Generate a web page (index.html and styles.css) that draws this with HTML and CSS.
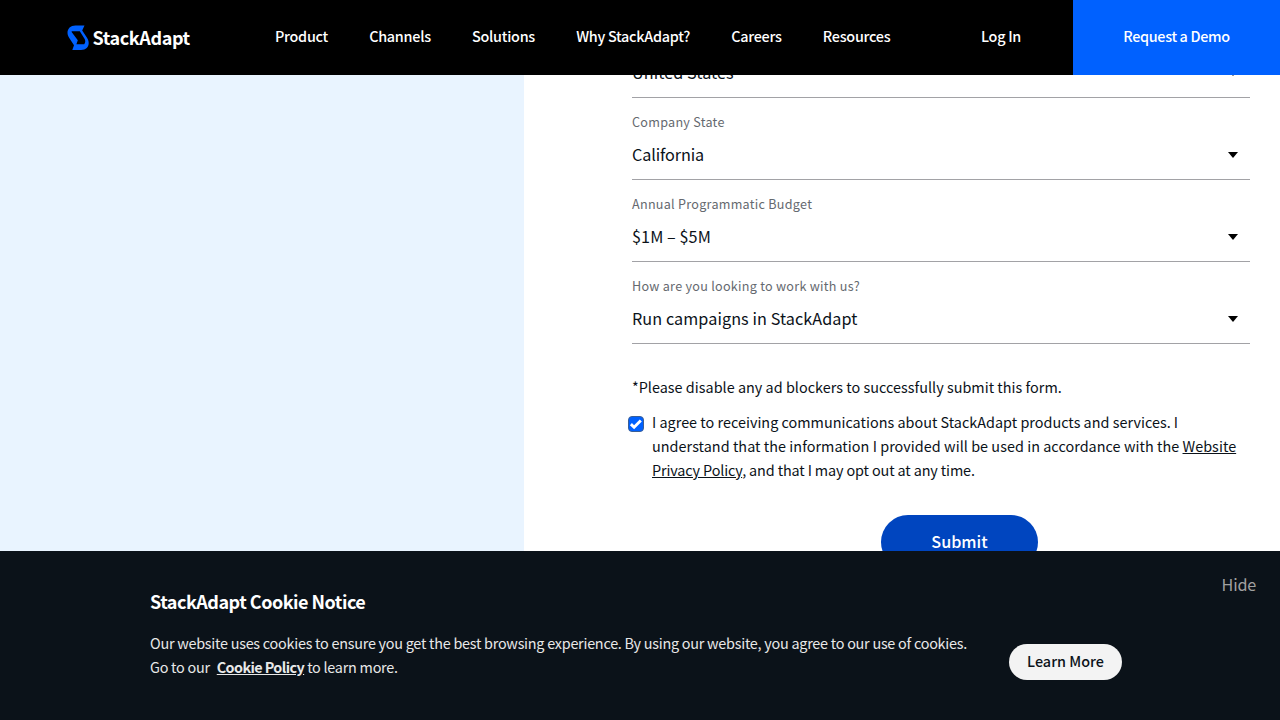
FILE: index.html
```html
<!DOCTYPE html>
<html lang="en">
<head>
<meta charset="utf-8">
<title>StackAdapt</title>
<link rel="stylesheet" href="styles.css">
</head>
<body>
<header class="header">
  <a class="logo">
    <svg class="logo-mark" width="22" height="26" viewBox="0 0 22 26"><path fill="#0061ff" fill-rule="evenodd" d="M17.5.4H8.500C3.500.4.5 3.600.5 7.600c0 2 .6 3.600 1.600 5.200L7 20.200 5.300 25H14c5 0 7.700-3 7.700-7 0-2-.7-3.700-1.700-5.200L15.200 5.400zM4.600 6.200h8.200l4.700 7.600c1.200 2 .9 4-.3 5.400H9.400l1.400-4L4.800 7.200z"/></svg>
    <span class="logo-text">StackAdapt</span>
  </a>
  <nav class="nav">
    <a>Product</a><a>Channels</a><a>Solutions</a><a>Why StackAdapt?</a><a>Careers</a><a>Resources</a>
  </nav>
  <a class="login">Log In</a>
  <a class="demo">Request a Demo</a>
</header>
<main class="main">
  <aside class="panel"></aside>
  <form class="form">
    <div class="field field-scrolled"><div class="value"><span>United States</span><i class="caret"></i></div></div>
    <div class="field"><label>Company State</label><div class="value value-tight"><span>California</span><i class="caret"></i></div></div>
    <div class="field"><label>Annual Programmatic Budget</label><div class="value"><span>$1M – $5M</span><i class="caret"></i></div></div>
    <div class="field"><label>How are you looking to work with us?</label><div class="value"><span>Run campaigns in StackAdapt</span><i class="caret"></i></div></div>
    <p class="note">*Please disable any ad blockers to successfully submit this form.</p>
    <div class="consent">
      <svg class="check" width="16" height="16" viewBox="0 0 16 16"><rect x=".5" y=".5" width="15" height="15" rx="3.500" fill="#0061ff" stroke="#3b5f96"/><path d="M2.900 8.100l3.200 3.100 6.700-6.700" fill="none" stroke="#fff" stroke-width="2.900"/></svg>
      <p><span class="lead">I agree to receiving communications about StackAdapt products and services. I</span><br>understand that the information I provided will be used in accordance with the <a>Website</a><br><span class="tail"><a>Privacy Policy</a>, and that I may opt out at any time.</span></p>
    </div>
    <button type="button" class="submit">Submit</button>
  </form>
</main>
<footer class="cookie">
  <div class="cookie-text">
    <h2>StackAdapt Cookie Notice</h2>
    <p>Our website uses cookies to ensure you get the best browsing experience. By using our website, you agree to our use of cookies.<br>Go to our &nbsp;<a>Cookie Policy</a> to learn more.</p>
  </div>
  <a class="more">Learn More</a>
  <a class="hide">Hide</a>
</footer>
</body>
</html>
```
FILE: styles.css
```css
* { box-sizing: border-box; }
body {
  margin: 0;
  height: 720px;
  display: grid;
  grid-template-rows: 75px 476px 169px;
  overflow: hidden;
  font-family: "Noto Sans CJK SC", "Noto Sans", sans-serif;
  font-size: 14.4px;
  color: #0b1219;
  background: #fff;
}
.header { display: flex; background: #000; color: #fff; font-weight: 500; letter-spacing: -.27px; line-height: 72px; white-space: nowrap; }
.logo { display: flex; align-items: flex-start; gap: 3.500px; width: 275px; padding-left: 67px; }
.logo-mark { margin-top: 25px; }
.logo-text { font-size: 18px; font-weight: 700; line-height: 74px; letter-spacing: -.4px; }
.nav { display: flex; gap: 41.200px; flex: 1; }
.login { width: 92px; }
.demo { width: 207px; height: 75px; text-align: center; background: #0061ff; letter-spacing: -.35px; }
.main { display: grid; grid-template-columns: 524px 1fr; overflow: hidden; }
.panel { background: #e9f4ff; }
.form { display: flex; flex-direction: column; padding: 0 30px 0 108px; }
.form > * { flex-shrink: 0; }
.field { height: 82px; padding-top: 13px; border-bottom: 1px solid #a2a2a6; }
.field label { display: block; font-size: 12.600px; line-height: 22px; letter-spacing: .27px; color: #65696f; }
.value { display: flex; align-items: center; justify-content: space-between; height: 42px; padding-right: 12px; font-size: 16.200px; letter-spacing: .08px; }
.value-tight { letter-spacing: -.1px; }
.field-scrolled { height: 23px; padding-top: 0; }
.field-scrolled .value { margin-top: -24px; }
.caret { width: 0; height: 0; margin-top: 2px; border: 5px solid transparent; border-top: 6px solid #000; border-bottom: 0; }
.note { margin: 31px 0 11px; line-height: 24px; letter-spacing: .02px; }
.consent { display: flex; gap: 8px; margin-left: -4px; line-height: 24px; letter-spacing: .04px; white-space: nowrap; }
.consent p { margin: 0; }
.consent a, .cookie-text a { text-decoration: underline; }
.lead { letter-spacing: .01px; }
.tail { letter-spacing: -.13px; }
.check { margin-top: 6px; flex: none; }
.submit { width: 157px; height: 54px; margin: 33px 0 0 249px; padding: 0 0 2px; border: 0; border-radius: 27px; background: #0045bf; color: #fff; font: 500 16.200px/52px "Noto Sans CJK SC", sans-serif; }
.cookie { display: flex; background: #0b1219; color: #e8e8e8; padding-left: 150px; white-space: nowrap; }
.cookie-text { width: 859px; padding-top: 36px; }
.cookie h2 { margin: 0 0 16px; font-size: 18px; line-height: 28px; letter-spacing: -.5px; color: #fff; }
.cookie p { margin: 0; line-height: 24px; letter-spacing: -.25px; }
.cookie-text a { font-weight: 700; letter-spacing: -.6px; margin: 0 0 0 1px; }
.more { width: 113px; height: 36px; margin-top: 93px; border-radius: 18px; background: #f3f3f3; color: #0b1219; font-weight: 500; line-height: 34px; text-align: center; }
.hide { margin: 21px 24px 0 auto; font-size: 16.200px; line-height: 24px; letter-spacing: -.2px; color: #a0a0a0; }
```
